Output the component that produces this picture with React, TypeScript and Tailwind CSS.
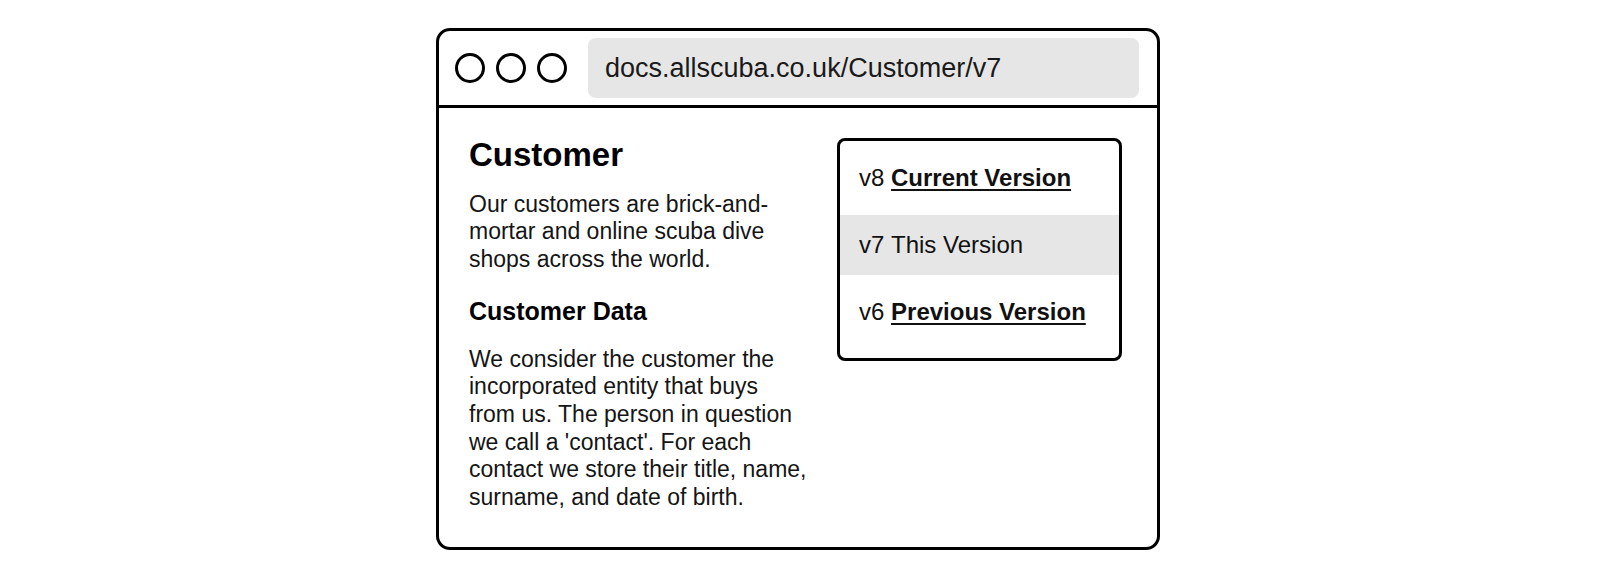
const versions = [
  { tag: 'v8', label: 'Current Version', link: true, active: false },
  { tag: 'v7', label: 'This Version', link: false, active: true },
  { tag: 'v6', label: 'Previous Version', link: true, active: false },
]

function TrafficLights() {
  return (
    <div className="flex items-center gap-[11px]">
      <div className="h-[30px] w-[30px] rounded-full border-[3px] border-black" />
      <div className="h-[30px] w-[30px] rounded-full border-[3px] border-black" />
      <div className="h-[30px] w-[30px] rounded-full border-[3px] border-black" />
    </div>
  )
}

function VersionBox() {
  return (
    <div className="mt-[2px] flex h-[223px] w-[285px] flex-col gap-[7px] rounded-[8px] border-[3px] border-black pt-[7px]">
      {versions.map((v) => (
        <div
          key={v.tag}
          className={`flex h-[60px] items-center pl-[19px] text-[24px] text-[#111] ${
            v.active ? 'bg-[#e6e6e6]' : ''
          }`}
        >
          <span>{v.tag}&nbsp;</span>
          {v.link ? (
            <a className="font-bold underline decoration-2 underline-offset-[3px]">{v.label}</a>
          ) : (
            <span>{v.label}</span>
          )}
        </div>
      ))}
    </div>
  )
}

export default function App() {
  return (
    <div
      className="h-[578px] w-full bg-white pt-[28px] pl-[436px]"
      style={{ fontFamily: '"Liberation Sans", Arial, sans-serif' }}
    >
      <div className="flex h-[522px] w-[724px] flex-col rounded-[14px] border-[3px] border-black">
        <div className="flex h-[77px] items-center gap-[21px] border-b-[3px] border-black pr-[18px] pl-[16px]">
          <TrafficLights />
          <div className="flex h-[60px] flex-1 items-center rounded-[8px] bg-[#e6e6e6] pl-[17px] text-[27px] text-[#1a1a1a]">
            docs.allscuba.co.uk/Customer/v7
          </div>
        </div>

        <div className="flex gap-[29px] pt-[28px] pl-[30px]">
          <div className="w-[339px] text-[#151515]">
            <h1 className="text-[33px] leading-[38px] font-bold text-black">Customer</h1>
            <p className="mt-[17px] text-[23px] leading-[27.3px]">
              Our customers are brick-and-mortar and online scuba dive shops across the world.
            </p>
            <h2 className="mt-[24px] text-[25px] leading-[28px] font-bold text-black">Customer Data</h2>
            <p className="mt-[21px] text-[23px] leading-[27.6px]">
              We consider the customer the incorporated entity that buys from us. The person in
              question we call a 'contact'. For each contact we store their title, name, surname,
              and date of birth.
            </p>
          </div>
          <VersionBox />
        </div>
      </div>
    </div>
  )
}
